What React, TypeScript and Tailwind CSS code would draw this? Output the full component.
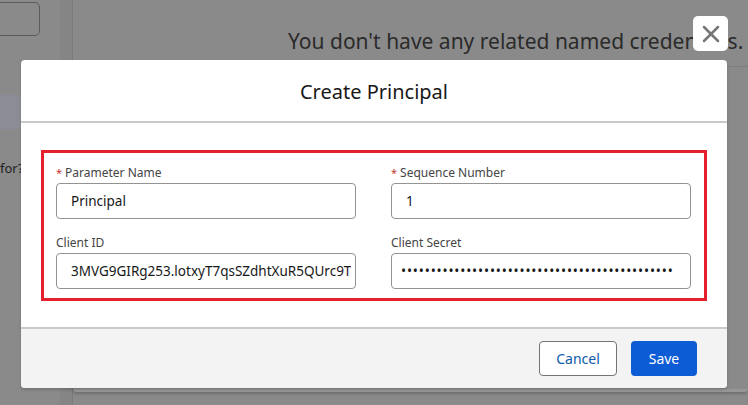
import { X } from "lucide-react";

type FieldProps = {
  label: string;
  value: string;
  required?: boolean;
  secret?: boolean;
};

const Field = ({ label, value, required, secret }: FieldProps) => {
  return (
    <div className="flex flex-col">
      <label className="flex items-center h-[16px] text-[12px] text-[#444444] leading-[16px]">
        {required && <span className="text-[#c23934] mr-[3px] text-[11px]">*</span>}
        {label}
      </label>
      <input
        readOnly
        type={secret ? "password" : "text"}
        defaultValue={value}
        className={
          secret
            ? "mt-[2px] h-[36px] w-full rounded-[4px] border border-[#939393] bg-white pl-[9px] pr-2 text-[13.5px] tracking-[0.85px] text-[#181818] outline-none font-['Noto_Sans']"
            : "mt-[2px] h-[36px] w-full rounded-[4px] border border-[#939393] bg-white pl-[14px] pr-[4px] text-[13.5px] text-[#181818] outline-none font-['Noto_Sans']"
        }
      />
    </div>
  );
};

const App = () => {
  return (
    <div className="relative w-[748px] h-[405px] overflow-hidden bg-[#8a8a8a] font-['Noto_Sans',sans-serif]">
      {/* page behind the overlay */}
      <div className="flex h-full">
        <div className="w-[60px] flex flex-col">
          <div className="ml-[-8px] mt-[2px] w-[48px] h-[34px] rounded-[5px] border border-[#5c5c5c]" />
          <div className="mt-[59px] h-[34px] w-[21px] bg-[#8b8c95]" />
          <p className="mt-[33px] text-[13px] text-[#1e1e1e] leading-none">for?</p>
        </div>
        <div className="w-[13px] bg-[#858585] border-r border-[#7b7b7b]" />
        <div className="flex-1 flex flex-col">
          <p className="pl-[215px] pt-[31px] text-[21px] text-[#2a2a2a] whitespace-nowrap leading-none">
            You don't have any related named credentials.
          </p>
          <div className="mt-[14px] h-[1px] bg-[#7e7e7e]" />
          <div className="h-[325px] rounded-b-[4px] border-b-[3px] border-[#979797] shadow-[0_2px_3px_rgba(0,0,0,0.2)]" />
        </div>
      </div>

      {/* close button */}
      <button className="absolute left-[693px] top-[16px] w-[35px] h-[35px] rounded-[5px] bg-white flex items-center justify-center">
        <X size={28} strokeWidth={2.2} color="#767676" />
      </button>

      {/* modal */}
      <div className="absolute left-[21px] top-[60px] w-[706px] rounded-[4px] bg-white overflow-hidden shadow-[0_2px_3px_rgba(0,0,0,0.16)]">
        <div className="h-[63px] flex items-center justify-center border-b-2 border-[#c9c9c9]">
          <h2 className="text-[20px] text-[#181818] pt-[2px]">Create Principal</h2>
        </div>
        <div className="px-[20px] pt-[27px] pb-[26px]">
          <div className="border-[3px] border-[#e3202b] pl-[12px] pr-[13px] pt-[12px] pb-[9px] grid grid-cols-2 gap-x-[35px] gap-y-[16px]">
            <Field label="Parameter Name" value="Principal" required />
            <Field label="Sequence Number" value="1" required />
            <Field label="Client ID" value="3MVG9GIRg253.lotxyT7qsSZdhtXuR5QUrc9Tg1jL0xQwYkAeP" />
            <Field label="Client Secret" value="0123456789012345678901234567890123456789012345" secret />
          </div>
        </div>
        <div className="h-[61px] border-t-2 border-[#c9c9c9] bg-[#f3f3f3] flex items-center justify-end gap-[14px] pr-[30px]">
          <button className="h-[35px] w-[78px] rounded-[4px] border border-[#747474] bg-white text-[14px] text-[#0b5cab]">
            Cancel
          </button>
          <button className="h-[35px] w-[66px] rounded-[4px] bg-[#0b5cd5] text-[14px] text-white">
            Save
          </button>
        </div>
      </div>
    </div>
  );
};

export default App;
